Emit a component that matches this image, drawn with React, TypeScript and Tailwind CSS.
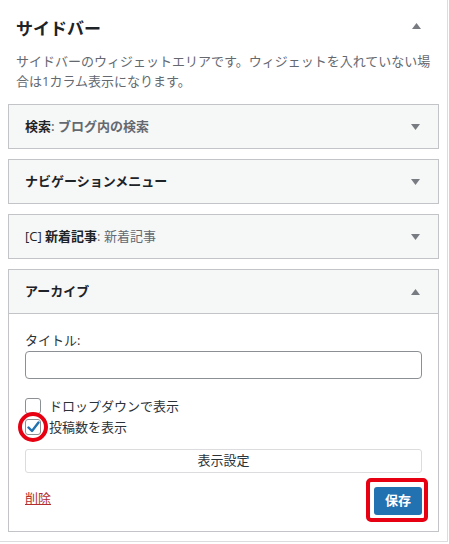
const Arrow = ({ up = false }: { up?: boolean }) => (
  <svg width="9" height="6" viewBox="0 0 9 6" className="shrink-0">
    {up ? <polygon points="0,6 9,6 4.5,0" fill="#787c82" /> : <polygon points="0,0 9,0 4.5,6" fill="#787c82" />}
  </svg>
);

const WidgetHeader = ({ children, open = false }: { children: React.ReactNode; open?: boolean }) => (
  <div className="h-[43px] flex items-center justify-between pl-4 pr-[18px] bg-[#f6f7f7] text-[13px] text-[#1d2327]">
    <div className="truncate">{children}</div>
    <Arrow up={open} />
  </div>
);

const App = () => {
  return (
    <div
      className="w-[449px] h-[544px] bg-white overflow-hidden"
      style={{ fontFamily: '"Open Sans", "Noto Sans CJK JP", sans-serif' }}
    >
      <div className="w-[448px] h-[542px] border-r border-b border-[#dcdcde] px-2 flex flex-col">
        {/* Sidebar title */}
        <div className="flex items-center justify-between pl-2 pr-[18px] pt-[17px]">
          <h2 className="text-[17px] leading-6 font-bold text-[#1d2327]">サイドバー</h2>
          <div className="-mt-[6px]">
            <Arrow up />
          </div>
        </div>
        <p className="pl-2 mt-[10px] text-[13px] leading-[20px] text-[#646970] whitespace-nowrap">
          サイドバーのウィジェットエリアです。ウィジェットを入れていない場
          <br />
          合は1カラム表示になります。
        </p>

        {/* Widgets */}
        <div className="mt-[13px] flex flex-col gap-[10px]">
          <div className="border border-[#c3c4c7]">
            <WidgetHeader>
              <span className="font-bold">検索</span>
              <span className="text-[#646970] font-semibold">: ブログ内の検索</span>
            </WidgetHeader>
          </div>
          <div className="border border-[#c3c4c7]">
            <WidgetHeader>
              <span className="font-bold">ナビゲーションメニュー</span>
            </WidgetHeader>
          </div>
          <div className="border border-[#c3c4c7]">
            <WidgetHeader>
              <span>[C] </span>
              <span className="font-bold">新着記事</span>
              <span className="text-[#646970]">: 新着記事</span>
            </WidgetHeader>
          </div>
          <div className="border border-[#c3c4c7]">
            <WidgetHeader open>
              <span className="font-bold">アーカイブ</span>
            </WidgetHeader>
            <div className="border-t border-[#c3c4c7] bg-white px-4 pt-[16px] pb-[16px] text-[13px] text-[#2c3338]">
              <label className="block leading-[20px]">タイトル:</label>
              <input
                type="text"
                className="mt-[1px] block w-full h-[28px] rounded-[4px] border border-[#8c8f94] bg-white px-2 outline-none"
              />
              <div className="mt-[16px] flex flex-col">
                <label className="flex items-center h-[21px]">
                  <span className="w-4 h-4 rounded-[3px] border border-[#8c8f94] bg-white shrink-0" />
                  <span className="ml-[8px] leading-[20px]">ドロップダウンで表示</span>
                </label>
                <label className="flex items-center h-[21px]">
                  <span className="relative w-4 h-4 rounded-[3px] border border-[#8c8f94] bg-white shrink-0 flex items-center justify-center">
                    <svg width="13" height="12" viewBox="0 0 13 12">
                      <path d="M1.5 6.5 L5 10 L11.5 1.5" fill="none" stroke="#2271b1" strokeWidth="2.4" strokeLinecap="round" strokeLinejoin="round" />
                    </svg>
                    <span className="absolute left-[-8px] top-[-8px] w-[30px] h-[30px] rounded-full border-4 border-[#e60012]" />
                  </span>
                  <span className="ml-[8px] leading-[20px]">投稿数を表示</span>
                </label>
              </div>
              <button className="mt-[12px] w-full h-[24px] rounded-[3px] border border-[#dcdcde] bg-white text-[13px] text-[#2c3338]">
                表示設定
              </button>
              <div className="mt-[14px] flex items-start justify-between">
                <a href="#" className="mt-[1px] text-[13px] leading-[20px] text-[#b32d2e] underline">
                  削除
                </a>
                <div className="relative">
                  <button className="w-[48px] h-[28px] rounded-[3px] bg-[#2271b1] text-white text-[13px] font-bold">
                    保存
                  </button>
                  <span className="absolute left-[-8px] top-[-9px] right-[-6px] bottom-[-7px] rounded-[5px] border-4 border-[#e60012] pointer-events-none" />
                </div>
              </div>
            </div>
          </div>
        </div>
      </div>
    </div>
  );
};

export default App;
